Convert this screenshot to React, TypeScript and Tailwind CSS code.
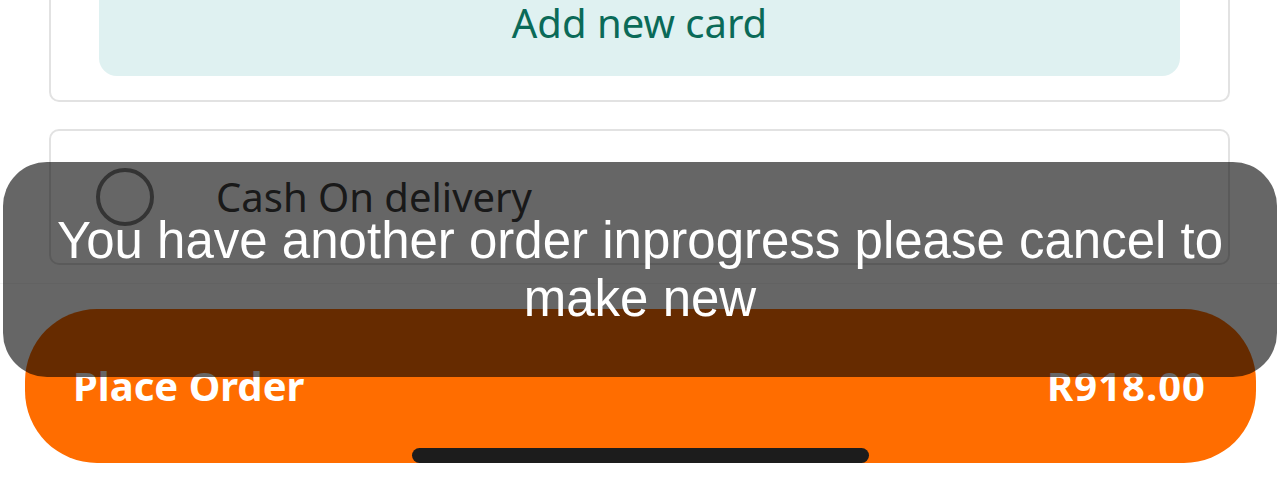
import React from 'react';

const PaymentSheet = () => {
    return (
        <div className="relative h-[486px] w-[1280px] overflow-hidden bg-white font-['Noto_Sans',sans-serif]">
            {/* Card list */}
            <div className="-mt-[60px] pl-[49px] pr-[50px]">
                <div className="rounded-[10px] border-2 border-[#e2e2e2] px-[48px] pt-[28px] pb-[24px]">
                    <button className="flex h-[106px] w-full items-center justify-center rounded-[18px] bg-[#dff1f1] text-[40px] leading-none text-[#0a6a58]">
                        Add new card
                    </button>
                </div>

                <div className="mt-[27px] flex h-[136px] items-center rounded-[10px] border-2 border-[#e2e2e2] pl-[45px]">
                    <span className="h-[58px] w-[58px] shrink-0 rounded-full border-[4px] border-[#828282]" />
                    <span className="ml-[62px] text-[40px] leading-none text-[#404040]">
                        Cash On delivery
                    </span>
                </div>
            </div>

            {/* Bottom bar */}
            <div className="mt-[18px] border-t border-[#f4f4f4] pt-[25px] pl-[25px] pr-[24px]">
                <div className="relative">
                    <button className="flex h-[154px] w-full items-center justify-between rounded-[72px] bg-[#ff6d00] pl-[48px] pr-[50px] text-[40px] font-bold leading-none text-white">
                        <span>Place Order</span>
                        <span className="tracking-[1px]">R918.00</span>
                    </button>
                    <div className="absolute bottom-0 left-[387px] h-[15px] w-[457px] rounded-full bg-[#1c1c1c]" />
                </div>
            </div>

            {/* Toast */}
            <div className="absolute top-[162px] left-[3px] right-[3px] flex h-[215px] items-center justify-center rounded-[44px] bg-black/60 px-[20px]">
                <p className="text-center font-['Liberation_Sans',Arial,sans-serif] text-[51px] leading-[58px] text-white">
                    You have another order inprogress please cancel to make new
                </p>
            </div>
        </div>
    );
};

export default function App() {
    return <PaymentSheet />;
}
